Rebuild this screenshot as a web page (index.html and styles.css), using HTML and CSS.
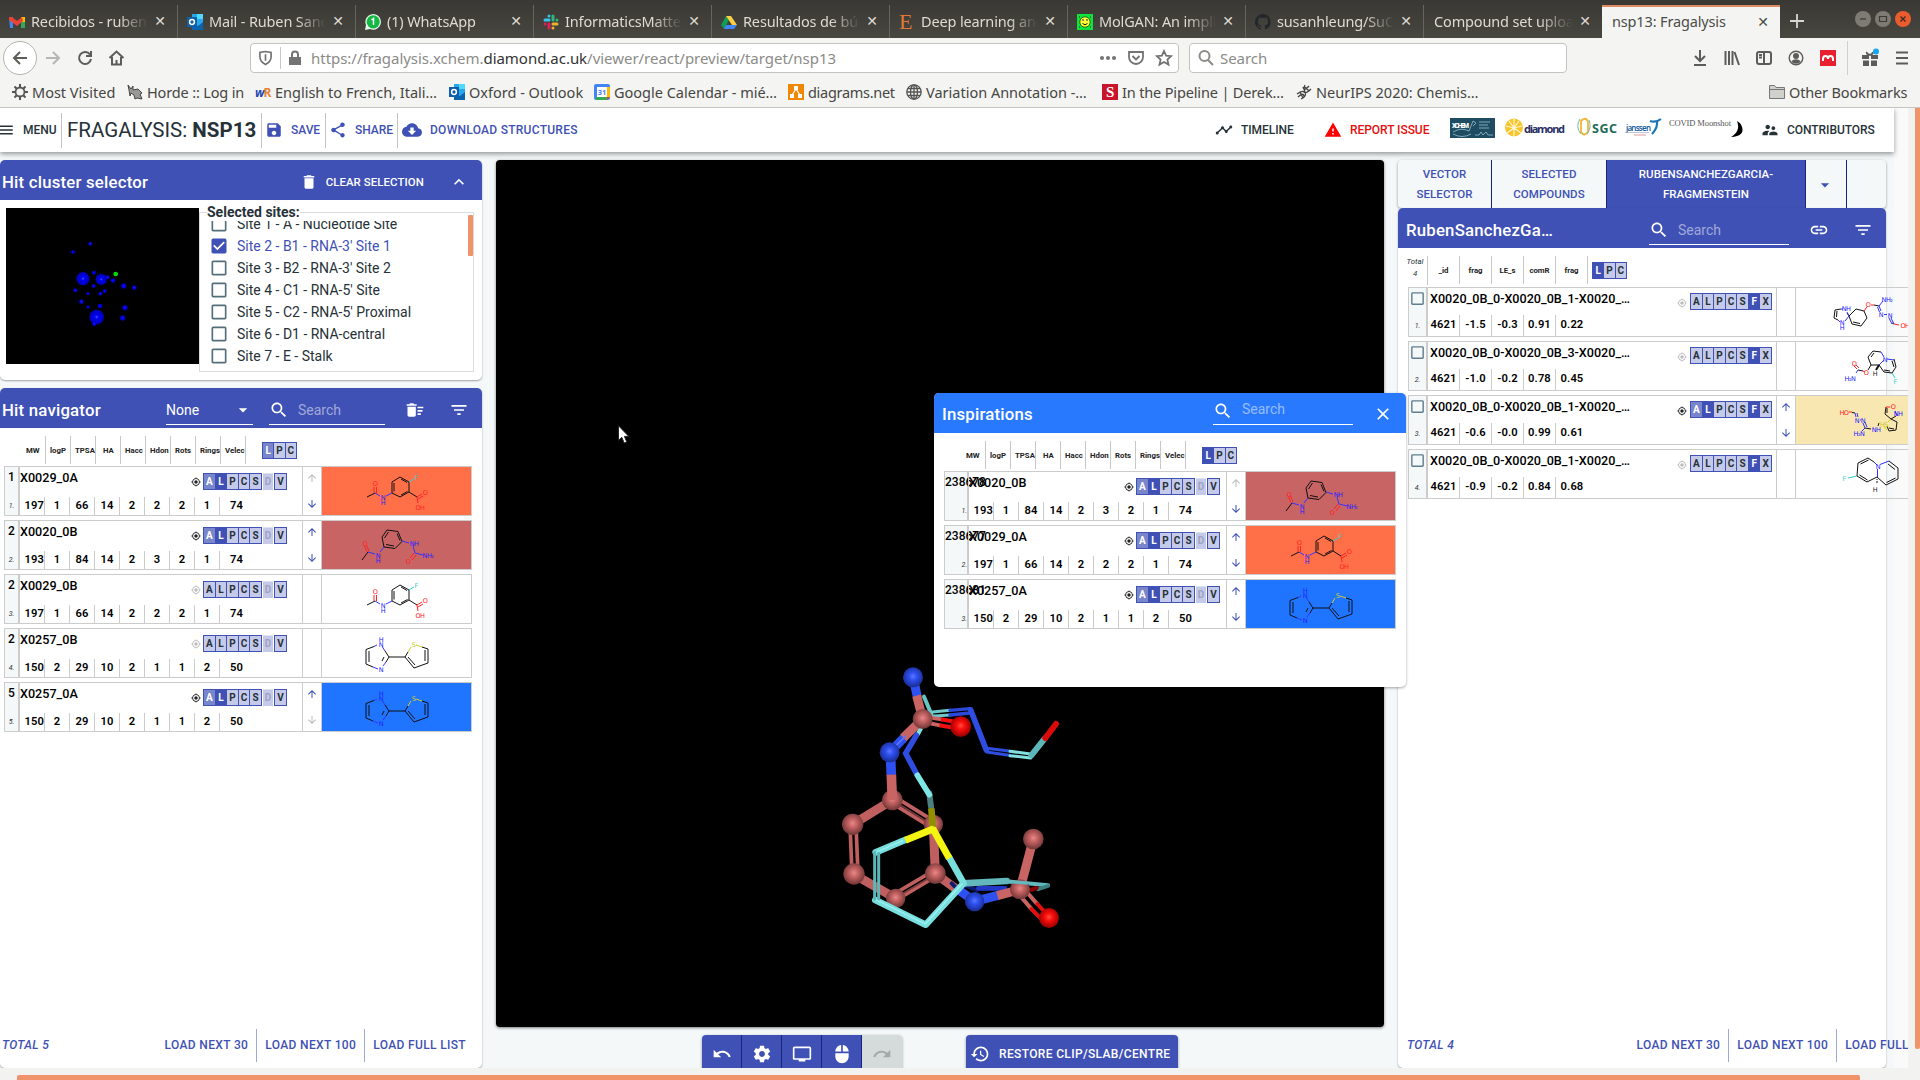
FILE: index.html
```html
<!DOCTYPE html>
<html lang="en">
<head>
<meta charset="utf-8">
<title>nsp13: Fragalysis</title>
<link rel="stylesheet" href="styles.css">
</head>
<body>
<svg class="defs" aria-hidden="true">
<defs>
<radialGradient id="gp" cx=".5" cy=".45" r=".55"><stop offset="0" stop-color="#e58a8a"/><stop offset=".35" stop-color="#c86464"/><stop offset="1" stop-color="#6e3535"/></radialGradient>
<radialGradient id="gb" cx=".5" cy=".45" r=".55"><stop offset="0" stop-color="#5a78ff"/><stop offset=".35" stop-color="#2f50f0"/><stop offset="1" stop-color="#172c90"/></radialGradient>
<radialGradient id="gr" cx=".5" cy=".45" r=".55"><stop offset="0" stop-color="#ff5040"/><stop offset=".35" stop-color="#ff0d0d"/><stop offset="1" stop-color="#900000"/></radialGradient>
<radialGradient id="gc"><stop offset="0" stop-color="#5050ff"/><stop offset=".25" stop-color="#0000f5"/><stop offset="1" stop-color="#0000b0"/></radialGradient>
</defs>
<symbol id="menu" viewBox="0 0 24 24"><path d="M3 18h18v-2H3v2zm0-5h18v-2H3v2zm0-7v2h18V6H3z"/></symbol>
<symbol id="save" viewBox="0 0 24 24"><path d="M17 3H5c-1.11 0-2 .9-2 2v14c0 1.1.89 2 2 2h14c1.1 0 2-.9 2-2V7l-4-4zm-5 16c-1.66 0-3-1.34-3-3s1.34-3 3-3 3 1.34 3 3-1.34 3-3 3zm3-10H5V5h10v4z"/></symbol>
<symbol id="share" viewBox="0 0 24 24"><path d="M18 16.08c-.76 0-1.44.3-1.96.77L8.91 12.7c.05-.23.09-.46.09-.7s-.04-.47-.09-.7l7.05-4.11c.54.5 1.25.81 2.04.81 1.66 0 3-1.34 3-3s-1.34-3-3-3-3 1.34-3 3c0 .24.04.47.09.7L8.04 9.81C7.5 9.31 6.79 9 6 9c-1.66 0-3 1.34-3 3s1.34 3 3 3c.79 0 1.5-.31 2.04-.81l7.12 4.16c-.05.21-.08.43-.08.65 0 1.61 1.31 2.92 2.92 2.92s2.92-1.31 2.92-2.92-1.31-2.92-2.92-2.92z"/></symbol>
<symbol id="cloud" viewBox="0 0 24 24"><path d="M19.35 10.04C18.67 6.59 15.64 4 12 4 9.11 4 6.6 5.64 5.35 8.04 2.34 8.36 0 10.91 0 14c0 3.31 2.69 6 6 6h13c2.76 0 5-2.24 5-5 0-2.64-2.05-4.78-4.65-4.96zM17 13l-5 5-5-5h3V9h4v4h3z"/></symbol>
<symbol id="timeline" viewBox="0 0 24 24"><path d="M23 8c0 1.1-.9 2-2 2-.18 0-.35-.02-.51-.07l-3.56 3.55c.05.16.07.34.07.52 0 1.1-.9 2-2 2s-2-.9-2-2c0-.18.02-.36.07-.52l-2.55-2.55c-.16.05-.34.07-.52.07s-.36-.02-.52-.07l-4.55 4.56c.05.16.07.33.07.51 0 1.1-.9 2-2 2s-2-.9-2-2 .9-2 2-2c.18 0 .35.02.51.07l4.56-4.55C8.02 9.36 8 9.18 8 9c0-1.1.9-2 2-2s2 .9 2 2c0 .18-.02.36-.07.52l2.55 2.55c.16-.05.34-.07.52-.07s.36.02.52.07l3.55-3.56C19.02 8.35 19 8.18 19 8c0-1.1.9-2 2-2s2 .9 2 2z"/></symbol>
<symbol id="warning" viewBox="0 0 24 24"><path d="M1 21h22L12 2 1 21zm12-3h-2v-2h2v2zm0-4h-2v-4h2v4z"/></symbol>
<symbol id="people" viewBox="0 0 24 24"><path d="M16.5 12c1.38 0 2.49-1.12 2.49-2.5S17.88 7 16.5 7C15.12 7 14 8.12 14 9.5s1.12 2.5 2.5 2.5zM9 11c1.66 0 2.99-1.34 2.99-3S10.66 5 9 5C7.34 5 6 6.34 6 8s1.34 3 3 3zm7.5 3c-1.83 0-5.5.92-5.5 2.75V19h11v-2.25c0-1.83-3.67-2.75-5.5-2.75zM9 13c-2.33 0-7 1.17-7 3.5V19h7v-2.25c0-.85.33-2.34 2.37-3.47C10.5 13.1 9.66 13 9 13z"/></symbol>
<symbol id="delete" viewBox="0 0 24 24"><path d="M6 19c0 1.1.9 2 2 2h8c1.1 0 2-.9 2-2V7H6v12zM19 4h-3.5l-1-1h-5l-1 1H5v2h14V4z"/></symbol>
<symbol id="less" viewBox="0 0 24 24"><path d="M12 8l-6 6 1.41 1.41L12 10.83l4.59 4.58L18 14z"/></symbol>
<symbol id="drop" viewBox="0 0 24 24"><path d="M7 10l5 5 5-5z"/></symbol>
<symbol id="search" viewBox="0 0 24 24"><path d="M15.5 14h-.79l-.28-.27C15.41 12.59 16 11.11 16 9.5 16 5.91 13.09 3 9.5 3S3 5.91 3 9.5 5.91 16 9.5 16c1.61 0 3.09-.59 4.23-1.57l.27.28v.79l5 4.99L20.49 19l-4.99-5zm-6 0C7.01 14 5 11.99 5 9.5S7.01 5 9.5 5 14 7.01 14 9.5 11.99 14 9.5 14z"/></symbol>
<symbol id="sweep" viewBox="0 0 24 24"><path d="M15 16h4v2h-4zm0-8h7v2h-7zm0 4h6v2h-6zM3 18c0 1.1.9 2 2 2h6c1.1 0 2-.9 2-2V8H3v10zM14 5h-3l-1-1H6L5 5H2v2h12z"/></symbol>
<symbol id="filter" viewBox="0 0 24 24"><path d="M10 18h4v-2h-4v2zM3 6v2h18V6H3zm3 7h12v-2H6v2z"/></symbol>
<symbol id="close" viewBox="0 0 24 24"><path d="M19 6.41L17.59 5 12 10.59 6.41 5 5 6.41 10.59 12 5 17.59 6.41 19 12 13.41 17.59 19 19 17.59 13.41 12z"/></symbol>
<symbol id="target" viewBox="0 0 24 24"><path d="M12 8c-2.21 0-4 1.79-4 4s1.79 4 4 4 4-1.79 4-4-1.79-4-4-4zm8.94 3c-.46-4.17-3.77-7.48-7.94-7.94V1h-2v2.06C6.83 3.52 3.52 6.83 3.06 11H1v2h2.06c.46 4.17 3.77 7.48 7.94 7.94V23h2v-2.06c4.17-.46 7.48-3.77 7.94-7.94H23v-2h-2.06zM12 19c-3.87 0-7-3.13-7-7s3.13-7 7-7 7 3.13 7 7-3.13 7-7 7z"/></symbol>
<symbol id="up" viewBox="0 0 24 24"><path d="M4 12l1.41 1.41L11 7.83V20h2V7.83l5.58 5.59L20 12l-8-8-8 8z"/></symbol>
<symbol id="down" viewBox="0 0 24 24"><path d="M20 12l-1.41-1.41L13 16.17V4h-2v12.17l-5.58-5.59L4 12l8 8 8-8z"/></symbol>
<symbol id="link" viewBox="0 0 24 24"><path d="M3.9 12c0-1.71 1.39-3.1 3.1-3.1h4V7H7c-2.76 0-5 2.24-5 5s2.24 5 5 5h4v-1.9H7c-1.71 0-3.1-1.39-3.1-3.1zM8 13h8v-2H8v2zm9-6h-4v1.9h4c1.71 0 3.1 1.39 3.1 3.1s-1.39 3.1-3.1 3.1h-4V17h4c2.76 0 5-2.24 5-5s-2.24-5-5-5z"/></symbol>
<symbol id="undo" viewBox="0 0 24 24"><path d="M12.5 8c-2.65 0-5.05.99-6.9 2.6L2 7v9h9l-3.62-3.62c1.39-1.16 3.16-1.88 5.12-1.88 3.54 0 6.55 2.31 7.6 5.5l2.37-.78C21.08 11.03 17.15 8 12.5 8z"/></symbol>
<symbol id="gear" viewBox="0 0 24 24"><path d="M19.43 12.98c.04-.32.07-.64.07-.98s-.03-.66-.07-.98l2.11-1.65c.19-.15.24-.42.12-.64l-2-3.46c-.12-.22-.39-.3-.61-.22l-2.49 1c-.52-.4-1.08-.73-1.69-.98l-.38-2.65C14.46 2.18 14.25 2 14 2h-4c-.25 0-.46.18-.49.42l-.38 2.65c-.61.25-1.17.59-1.69.98l-2.49-1c-.23-.09-.49 0-.61.22l-2 3.46c-.13.22-.07.49.12.64l2.11 1.65c-.04.32-.07.65-.07.98s.03.66.07.98l-2.11 1.65c-.19.15-.24.42-.12.64l2 3.46c.12.22.39.3.61.22l2.49-1c.52.4 1.08.73 1.69.98l.38 2.65c.03.24.24.42.49.42h4c.25 0 .46-.18.49-.42l.38-2.65c.61-.25 1.17-.59 1.69-.98l2.49 1c.23.09.49 0 .61-.22l2-3.46c.12-.22.07-.49-.12-.64l-2.11-1.65zM12 15.5c-1.93 0-3.5-1.57-3.5-3.5s1.57-3.5 3.5-3.5 3.5 1.57 3.5 3.5-1.57 3.5-3.5 3.5z"/></symbol>
<symbol id="tv" viewBox="0 0 24 24"><path d="M21 3H3c-1.1 0-2 .9-2 2v12c0 1.1.9 2 2 2h5v2h8v-2h5c1.1 0 1.99-.9 1.99-2L23 5c0-1.1-.9-2-2-2zm0 14H3V5h18v12z"/></symbol>
<symbol id="mouse" viewBox="0 0 24 24"><path d="M13 1.07V9h7c0-4.08-3.05-7.44-7-7.93zM4 15c0 4.42 3.58 8 8 8s8-3.58 8-8v-4H4v4zm7-13.93C7.05 1.56 4 4.92 4 9h7V1.07z"/></symbol>
<symbol id="history" viewBox="0 0 24 24"><path d="M13 3c-4.97 0-9 4.03-9 9H1l3.89 3.89.07.14L9 12H6c0-3.87 3.13-7 7-7s7 3.13 7 7-3.13 7-7 7c-1.93 0-3.68-.79-4.94-2.06l-1.42 1.42C8.27 19.99 10.51 21 13 21c4.97 0 9-4.03 9-9s-4.03-9-9-9zm-1 5v5l4.28 2.54.72-1.21-3.5-2.08V8H12z"/></symbol>
<symbol id="checked" viewBox="0 0 24 24"><path d="M19 3H5c-1.11 0-2 .9-2 2v14c0 1.1.89 2 2 2h14c1.11 0 2-.9 2-2V5c0-1.1-.89-2-2-2zm-9 14l-5-5 1.41-1.41L10 14.17l7.59-7.59L19 8l-9 9z"/></symbol>
<symbol id="unchecked" viewBox="0 0 24 24"><path d="M19 5v14H5V5h14m0-2H5c-1.1 0-2 .9-2 2v14c0 1.1.9 2 2 2h14c1.1 0 2-.9 2-2V5c0-1.1-.9-2-2-2z"/></symbol>
<symbol id="outlook" viewBox="0 0 16 16"><path fill="#28a8ea" d="M5 0h11v15H5z"/><path fill="#50d9ff" d="M10 0h6v5h-6z"/><path fill="#0a64ad" d="M5 9l6 3 5-4v8H5z"/><path fill="#0f5fa8" d="M0 3h10v10H0z"/><circle cx="5" cy="8" r="2.4" fill="none" stroke="#fff" stroke-width="1.5"/></symbol>

<symbol id="mol-a" viewBox="0 0 149 48">
<path class="bk" d="M45 30l8-4M70 26V15l8-5 9 5v10l-9 5zM72 24.500V16M79 12l6 3.500M85.500 24.500L79 28M87 25l8 5"/>
<path class="or" d="M52 26v-6M54.500 26v-6M95 30l5-3M96 32l5-3M95 30l1 6"/><path class="nb" d="M53 26l5 3M64 29l6-3"/><path class="fc" d="M87 15l5-3"/>
<text class="or" x="53" y="18.500">O</text><text class="or" x="103" y="27.500">O</text><text class="or" x="98" y="42.500">OH</text><text class="nb" x="61" y="32.500">N</text><text class="nb" x="61" y="37.500">H</text><text class="fc" x="94" y="12.500">F</text></symbol>
<symbol id="mol-b" viewBox="0 0 149 48">
<path class="bk" d="M40 39l6-8M60 16l5-7 11 1.500 4 10-7 7-11-1.500zM62.500 17l4-6M75 12.500l3 7M72 25l-8-1.500"/>
<path class="or" d="M45 31l-2.500-6M47 30l-2.500-6M92 32l-4 5M94 34l-4 5"/><path class="nb" d="M46 31l7 2M58 31l4-5M80 20l7 2M91 25l2 7M93 32l8 2"/>
<text class="or" x="43" y="24.500">O</text><text class="or" x="86" y="42.500">O</text><text class="nb" x="56" y="36.500">N</text><text class="nb" x="56" y="41.500">H</text><text class="nb" x="92" y="24.500">NH</text><text class="nb" x="106" y="37">NH₂</text></symbol>
<symbol id="mol-c" viewBox="0 0 149 48">
<path class="bk" d="M52 17.500l-8 3v14.500l7 3M47 22v11M63 22l4 6-3 5M62 28l-2 4M67 28h16l9 11 14-5V20l-6-2M86 28l7 8M103 21v11M83 28l3-5"/>
<path class="nb" d="M55 16l-3 1.500M60.500 18l2.500 4M51 38l5 2M64 33l-3 4"/><path class="sy" d="M86 23l3-5M94 16l6 2"/>
<text class="nb" x="59" y="17.500">N</text><text class="nb" x="59" y="12.500">H</text><text class="nb" x="59" y="42.500">N</text><text class="sy" x="91.500" y="17.500">S</text></symbol>
<symbol id="mol-d" viewBox="0 0 149 48">
<path class="bk" d="M39 22l-1 8 4 2M41 23l-.5 6M39 22l6-1M53 28l7-7 8 2 3 7-6 8-9-2zM57 34l7 1.500M53 28l-2-3M78 17l5 1M96 35l2 1"/>
<path class="nb" d="M45 21h2M51 24l2 4M42 32l2 2M49 33l4-5M83 18l2 5M81.500 19l2 5M83 18l4-5M88 26.500h3M95 30l3 6M93 30l3 6"/><path class="or" d="M68 23l3-4M75 17h3M98 36l5 1"/>
<text class="nb" x="50" y="23">NH</text><text class="nb" x="46" y="37">N</text><text class="nb" x="46" y="42">H</text><text class="or" x="72" y="18.500">O</text><text class="nb" x="91" y="13.500">NH₂</text><text class="nb" x="85" y="28.500">N</text><text class="nb" x="94" y="29.500">N</text><text class="or" x="109" y="40">OH</text></symbol>
<symbol id="mol-e" viewBox="0 0 149 48">
<path class="bk" d="M72 15l5-6 8 1M75 15l3-4M72 15l3 8h8M98 17l2 8-4 6-8-1-5-7M96 19l2 6M94 29l-6-1M75 23l-3 5M62 28l5 1"/><path class="thick" d="M83 23l-3 5"/>
<path class="nb" d="M85 10l3 5M83 23l5-5M91 17l7 1M60 31l2-3"/><path class="or" d="M67 29l2 1M61 27l-3-3M63 26l-3-3"/><path class="fc" d="M96 31l3 5"/>
<text class="nb" x="89" y="19.500">N</text><text class="bkt" x="79" y="33.500">H</text><text class="fc" x="99" y="42">F</text><text class="or" x="70" y="32.500">O</text><text class="or" x="58" y="24">O</text><text class="nb" x="54" y="38.500">H₂N</text></symbol>
<symbol id="mol-f" viewBox="0 0 149 48">
<path class="bk" d="M59 17l-3-.5M95 23l6 3-1 8-7 1-2-5M98 33l-5-1M95 23l-6-5 1-7M91 17v-5M69 32l6 1M83 27l-1 3M95 23l5-3"/>
<path class="nb" d="M59 17l1 4M61 17l1 4M64 24h1M67 27l2 5M69 26l2 5M69 32l-3 3M101 20l-2-5"/><path class="or" d="M53 16h3M90 11h4"/><path class="sy" d="M83 27h1M92 26l3-3M88 30l3 4"/>
<text class="or" x="48" y="18.500">HO</text><text class="nb" x="61" y="27">N</text><text class="nb" x="67" y="27">N</text><text class="nb" x="63" y="40">H₂N</text><text class="nb" x="80" y="35.500">NH</text><text class="sy" x="88" y="30.500">HS</text><text class="or" x="97" y="13">O</text><text class="nb" x="102" y="19.500">NH</text></symbol>
<symbol id="mol-g" viewBox="0 0 149 48">
<path class="bk" d="M81 27l-10 5-10-6 1-13 10-5 6 4M64.500 14l8-4M63.500 25l8 5M93 11l9 7v11l-12 6-9-8M92 14l7 5.500M99.500 28l-9 4.500M81 29v1M80 32h2"/>
<path class="nb" d="M78 12l3 3M81.500 19v8M84 14.500l9-3.500"/><path class="fc" d="M61 26l-9 2"/>
<text class="nb" x="82" y="18.500">N</text><text class="fc" x="48" y="30.500">F</text><text class="bkt" x="79" y="41.500">H</text></symbol>
</svg>

<header class="browser">
<div class="tabs">
 <div class="tab"><svg class="fav" viewBox="0 0 16 16"><path fill="#4285f4" d="M0 3h4v11H1z"/><path fill="#34a853" d="M12 6h4v8h-4z"/><path fill="#fbbc04" d="M12 3h4v5h-4z"/><path fill="#ea4335" d="M0 3h3l5 4 5-4 1 4-6 5-8-6z"/></svg><span>Recibidos - rubens</span><i>✕</i></div>
 <div class="tab"><svg class="fav"><use href="#outlook"/></svg><span>Mail - Ruben Sanchez</span><i>✕</i></div>
 <div class="tab"><svg class="fav" viewBox="0 0 16 16"><path fill="#e8f5e9" d="M0 16l1-5a7.800 7.800 0 1 1 4 4z"/><circle cx="8.200" cy="7.800" r="6.600" fill="#12b842"/><path fill="none" stroke="#fff" stroke-width="1.500" d="M6.500 6L8.500 4.500V11"/></svg><span>(1) WhatsApp</span><i>✕</i></div>
 <div class="tab"><svg class="fav line" viewBox="0 0 16 16" stroke-width="3" stroke-linecap="round"><path stroke="#36c5f0" d="M2 6h4M6 2v.1"/><path stroke="#2eb67d" d="M10 2v4M14 6h-.1"/><path stroke="#ecb22e" d="M14 10h-4M10 14v-.1"/><path stroke="#e01e5a" d="M6 14v-4M2 10h.1"/></svg><span>InformaticsMatters</span><i>✕</i></div>
 <div class="tab"><svg class="fav" viewBox="0 0 16 16"><path fill="#0f9d58" d="M5 2L0 11l3 4 5-9z"/><path fill="#ffcd40" d="M5 2h5l6 9h-5z"/><path fill="#4285f4" d="M5 11h11l-3 4H3z"/></svg><span>Resultados de búsq</span><i>✕</i></div>
 <div class="tab"><b class="fav ltr-e">E</b><span>Deep learning and</span><i>✕</i></div>
 <div class="tab"><svg class="fav" viewBox="0 0 16 16"><path fill="#0fe43c" d="M0 0h16v16H0z"/><circle cx="8" cy="8" r="5.200" fill="#ff3" stroke="#262"/><path fill="none" stroke="#222" d="M6 5v2M10 5v2M5.500 9.500q2.500 2.500 5 0M2 3h1M13 13h1M13 3h1M2 13h1"/></svg><span>MolGAN: An implicit</span><i>✕</i></div>
 <div class="tab"><svg class="fav" viewBox="0 0 16 16"><path fill="#22272b" d="M8 0a8 8 0 0 0-2.500 15.600c.4 0 .5-.2.500-.400v-1.500c-2.200.5-2.700-1-2.700-1-.4-.9-.9-1.200-.9-1.200-.7-.5.1-.5.100-.5.8 0 1.200.8 1.200.8.7 1.200 1.900.9 2.300.7 0-.5.300-.9.500-1.100-1.800-.2-3.600-.9-3.600-4 0-.9.300-1.600.8-2.100 0-.2-.3-1 .1-2.100 0 0 .7-.2 2.200.8a7.500 7.500 0 0 1 4 0c1.500-1 2.200-.8 2.200-.8.4 1.100.1 1.900.1 2.100.5.6.8 1.300.8 2.100 0 3.100-1.900 3.700-3.700 3.900.3.300.6.800.6 1.500v2.200c0 .2.100.5.500.4A8 8 0 0 0 8 0z"/></svg><span>susanhleung/SuCOS</span><i>✕</i></div>
 <div class="tab noicon last"><span>Compound set upload</span><i>✕</i></div>
 <div class="tab noicon active"><span>nsp13: Fragalysis</span><i>✕</i></div>
 <svg class="plus" viewBox="0 0 14 14"><path d="M7 0v14M0 7h14" stroke="#d8d7d0" stroke-width="1.800"/></svg>
 <div class="wins"><svg viewBox="0 0 16 16"><circle cx="8" cy="8" r="8" fill="#7d7b73"/><path stroke="#3c3b37" stroke-width="1.300" d="M5 8h6"/></svg><svg viewBox="0 0 16 16"><circle cx="8" cy="8" r="8" fill="#7d7b73"/><path fill="none" stroke="#3c3b37" stroke-width="1.200" d="M4.500 5.500h7v5h-7z"/></svg><svg viewBox="0 0 16 16"><circle cx="8" cy="8" r="8" fill="#ea5c2e"/><path stroke="#3c2b27" stroke-width="1.300" d="M5.500 5.500l5 5m0-5l-5 5"/></svg></div>
</div>
<div class="nav">
 <span class="back"><svg viewBox="0 0 16 16"><path d="M15 8H2M8 2L2 8l6 6"/></svg></span>
 <svg class="fwd" viewBox="0 0 16 16"><path d="M1 8h13M8 2l6 6-6 6"/></svg>
 <svg class="reload" viewBox="0 0 16 16"><path d="M13 4.500A6 6 0 1 0 14 9M14 1v5H9"/></svg>
 <svg class="home" viewBox="0 0 16 16"><path d="M1 8l7-6.500L15 8M3.500 7v7.500h9V7M8 14v-4"/></svg>
 <div class="url">
  <svg class="shield" viewBox="0 0 14 16"><path d="M1 2l6-1 6 1v5c0 4-3 6.500-6 8-3-1.500-6-4-6-8z"/><path d="M7 4v7"/></svg><i></i>
  <svg class="lock" viewBox="0 0 12 16"><path d="M0 7h12v8H0z"/><path fill="none" stroke="#737373" stroke-width="2" d="M3 8V4.500a3 3 0 0 1 6 0V8"/></svg>
  <span class="addr">https://fragalysis.xchem.<b>diamond.ac.uk</b>/viewer/react/preview/target/nsp13</span>
  <svg class="dots" viewBox="0 0 16 16"><circle cx="2" cy="8" r="2"/><circle cx="8" cy="8" r="2"/><circle cx="14" cy="8" r="2"/></svg>
  <svg viewBox="0 0 16 16"><path d="M1 2h14v5a7 7 0 0 1-14 0zM4.500 6L8 9.500 11.500 6"/></svg>
  <svg viewBox="0 0 16 16"><path d="M8 1l2.100 4.700 5 .5-3.700 3.400 1.100 5L8 12l-4.500 2.600 1.100-5L.9 6.200l5-.5z"/></svg>
 </div>
 <div class="find"><svg viewBox="0 0 16 16"><circle cx="6.500" cy="6" r="5"/><path d="M10 10l5 5"/></svg><span>Search</span></div>
 <div class="tools">
  <svg viewBox="0 0 16 16"><path d="M8 0v11M3 6l5 5 5-5M2 15h12"/></svg>
  <svg viewBox="0 0 16 16"><path d="M1.500 1v14M5 1v14M8.500 1v14M10.500 2l4.500 13"/></svg>
  <svg viewBox="0 0 16 16"><rect x="1" y="2" width="14" height="12" rx="2"/><path d="M8 2v12M3 5h3M3 7.500h3"/></svg>
  <svg viewBox="0 0 16 16"><circle cx="8" cy="8" r="6.800" stroke-width="1.400"/><circle cx="8" cy="6" r="3" fill="#5c5c58" stroke="none"/><path fill="#5c5c58" stroke="none" d="M3.500 11.500c2-3 7-3 9 0-2 3-7 3-9 0z"/></svg>
  <svg viewBox="0 0 16 16"><path fill="#e9202f" stroke="none" d="M0 0h16v16H0z"/><path stroke="#fff" d="M3 11V9q0-3 2.500-3T8 9q0-3 2.500-3T13 9v2"/></svg>
  <i></i>
  <svg viewBox="0 0 16 16"><path fill="#5c5c58" stroke="none" d="M0 5h7v4H0zM9 5h7v4H9zM1 10.500h6V16H1zM9 10.500h6V16H9z"/><path d="M8 5Q4 4 5 2M8 5q3-1 3-3"/><circle cx="14" cy="1.500" r="3" fill="#12a8f5" stroke="none"/></svg>
  <svg viewBox="0 0 16 16"><path d="M2 2.500h12M2 8h12M2 13.500h12"/></svg>
 </div>
</div>
<div class="marks">
 <span class="m1"><svg viewBox="0 0 16 16"><circle cx="8" cy="8" r="4.500" fill="none" stroke="#555" stroke-width="1.800"/><path stroke="#555" stroke-width="2" d="M8 0v3M8 13v3M0 8h3M13 8h3M2.500 2.500l2 2M11.500 11.500l2 2M2.500 13.500l2-2M11.500 4.500l2-2"/></svg>Most Visited</span>
 <span class="m2"><svg viewBox="0 0 16 16"><path fill="#999" stroke="#444" d="M1 1l3 4 2-3v4l5-1 4 4-2 1 2 5-5-1-2 1-1-4-3-2-1 3-1-6z"/></svg>Horde :: Log in</span>
 <span class="m3"><b class="wr"><em>w</em>R</b>English to French, Itali…</span>
 <span class="m4"><svg><use href="#outlook"/></svg>Oxford - Outlook</span>
 <span class="m5"><svg viewBox="0 0 16 16"><rect width="16" height="16" rx="2" fill="#4285f4"/><path fill="#34a853" d="M2 13h11v3H2z"/><path fill="#fbbc04" d="M13 3h3v10h-3z"/><path fill="#ea4335" d="M13 13h3l-3 3z"/><path fill="#fff" d="M3 3h10v10H3z"/><text x="8" y="10.800" font-size="7.500" font-weight="700" text-anchor="middle" fill="#4285f4">31</text></svg>Google Calendar - mié…</span>
 <span class="m6"><svg viewBox="0 0 16 16"><path fill="#f08705" d="M0 0h16v16H0z"/><path fill="#fff" d="M6 2h4v4H6zM2 10h4v4H2zM10 10h4v4h-4z"/><path stroke="#fff" stroke-width="1.200" d="M8 5l-4 6M8 5l4 6"/></svg>diagrams.net</span>
 <span class="m7"><svg class="line" viewBox="0 0 16 16" stroke="#555" stroke-width="1.300"><circle cx="8" cy="8" r="7.200"/><ellipse cx="8" cy="8" rx="3.500" ry="7.200"/><path d="M1 8h14M8 1v14M2 4.500h12M2 11.500h12"/></svg>Variation Annotation -…</span>
 <span class="m8"><b class="ltr-s">S</b>In the Pipeline | Derek…</span>
 <span class="m9"><svg class="line" viewBox="0 0 16 16" stroke="#444" stroke-width="1.300"><path d="M1 10q5-4 7-2t7-3M2 13q5-5 6-1M7 3q1 5 6-1M9 1q-2 3 0 7t-4 7M4 8l3 6M9 3l4 4"/></svg>NeurIPS 2020: Chemis…</span>
 <span class="m10"><svg viewBox="0 0 16 16"><path fill="#d0d0cc" stroke="#777" d="M.5 14.500v-13h5l1.500 2h8.500v11zM.5 5.500h15"/></svg>Other Bookmarks</span>
</div>
</header>

<div class="page">
<div class="app">
<div class="appbar">
 <span class="btn b-menu"><svg><use href="#menu"/></svg>MENU</span>
 <h1>FRAGALYSIS: <b>NSP13</b></h1>
 <span class="btn b-save blue"><svg><use href="#save"/></svg>SAVE</span>
 <span class="btn b-share blue"><svg><use href="#share"/></svg>SHARE</span>
 <span class="btn b-down blue"><svg><use href="#cloud"/></svg>DOWNLOAD STRUCTURES</span>
 <span class="btn b-time"><svg><use href="#timeline"/></svg>TIMELINE</span>
 <span class="btn b-report"><svg><use href="#warning"/></svg>REPORT ISSUE</span>
 <svg class="logos" viewBox="0 0 300 24">
  <path fill="#1d4c63" d="M0 2h45v20H0z"/><text x="2" y="12" font-size="6.500" font-weight="900" fill="#fff" textLength="17">XCHEM</text><path fill="none" stroke="#9cc0cc" stroke-width=".8" d="M3 16q8-5 16-1l2-5 2-5 3 2-3 3M3 18q9 5 18 0M25 19h4l2-3 2 3 3-3 2 3h5M29 6h11M29 9h9M29 12h10"/>
  <circle cx="64" cy="11.500" r="9" fill="#f8c52c"/><path stroke="#fff6d0" stroke-width="1.200" d="M64 12V3M64 12l-5-7M64 12l5-7M64 12l-8-2M64 12l8-2M64 12l-7 5M64 12l7 5M64 12v9"/><text class="dl" x="74" y="17" textLength="41">diamond</text>
  <path fill="none" stroke="#f2b632" stroke-width="1.800" d="M131 5q5-5 7 1v10q-4 5-7 0z"/><path fill="none" stroke="#7ab3a8" d="M130 3q-5 8 1 15M139 4q3 7-2 14"/><text class="sgc" x="142" y="17" textLength="25">SGC</text>
  <text class="jan" x="176" y="14.500" textLength="25">janssen</text><path fill="none" stroke="#1b75b5" stroke-width="2.200" d="M200 5q6 2 11-2M207 5q1 7-5 13"/><path stroke="#d99" d="M184 19h12"/><path stroke="#aac" stroke-width=".7" d="M176 16.500h23"/>
  <text class="cov" x="219" y="10" textLength="62">COVID Moonshot</text><path fill="#000" d="M287 5q4 10-6 16 14-1 11-10-1-4-5-6z"/>
 </svg>
 <span class="btn b-contrib"><svg><use href="#people"/></svg>CONTRIBUTORS</span>
</div>

<main>
<section class="left">
 <div class="card cluster">
  <div class="head"><h2>Hit cluster selector</h2><span class="clear"><svg><use href="#delete"/></svg>CLEAR SELECTION</span><svg class="ic20"><use href="#less"/></svg></div>
  <div class="cbody">
   <svg class="map" viewBox="0 0 193 156"><g transform="translate(-6 -53) scale(.33333)" fill="url(#gc)"><circle cx="249" cy="371" r="20"/><circle cx="304" cy="373" r="17"/><circle cx="290" cy="486" r="22"/><circle cx="271" cy="266" r="6"/><circle cx="219" cy="291" r="6"/><circle cx="282" cy="353" r="6"/><circle cx="323" cy="367" r="6"/><circle cx="339" cy="377" r="7"/><circle cx="371" cy="393" r="8"/><circle cx="403" cy="398" r="7"/><circle cx="281" cy="393" r="6"/><circle cx="226" cy="406" r="6"/><circle cx="264" cy="416" r="5"/><circle cx="301" cy="416" r="6"/><circle cx="314" cy="408" r="6"/><circle cx="244" cy="440" r="7"/><circle cx="264" cy="456" r="5"/><circle cx="300" cy="453" r="7"/><circle cx="375" cy="458" r="8"/><circle cx="368" cy="489" r="8"/><circle cx="283" cy="506" r="7"/><circle cx="347" cy="357" r="7" fill="#0d0"/></g></svg>
   <fieldset><legend>Selected sites:</legend>
    <div class="sites">
     <label><svg><use href="#unchecked"/></svg>Site 1 - A - Nucleotide Site</label>
     <label class="on"><svg><use href="#checked"/></svg>Site 2 - B1 - RNA-3' Site 1</label>
     <label><svg><use href="#unchecked"/></svg>Site 3 - B2 - RNA-3' Site 2</label>
     <label><svg><use href="#unchecked"/></svg>Site 4 - C1 - RNA-5' Site</label>
     <label><svg><use href="#unchecked"/></svg>Site 5 - C2 - RNA-5' Proximal</label>
     <label><svg><use href="#unchecked"/></svg>Site 6 - D1 - RNA-central</label>
     <label><svg><use href="#unchecked"/></svg>Site 7 - E - Stalk</label>
     <label><svg><use href="#unchecked"/></svg></label>
    </div><i class="thumb"></i>
   </fieldset>
  </div>
 </div>
 <div class="card navi">
  <div class="head"><h2>Hit navigator</h2><span class="select">None<svg><use href="#drop"/></svg></span><span class="sfield"><svg><use href="#search"/></svg>Search</span><svg class="ic20 sw"><use href="#sweep"/></svg><svg class="ic20"><use href="#filter"/></svg></div>
  <div class="cols"><span>MW</span><span>logP</span><span>TPSA</span><span>HA</span><span>Hacc</span><span>Hdon</span><span>Rots</span><span>Rings</span><span>Velec</span><div class="lpc half"><b>L</b><b>P</b><b>C</b></div></div>
  <div class="row"><div class="num"><b>1</b><i>1.</i></div><div class="info"><div class="top"><span class="name">X0029_0A</span><svg class="tg"><use href="#target"/></svg><div class="tags on"><b>A</b><b>L</b><b>P</b><b>C</b><b>S</b></div><b class="d">D</b><b class="v">V</b></div><div class="vals"><span>197</span><span>1</span><span>66</span><span>14</span><span>2</span><span>2</span><span>2</span><span>1</span><span>74</span></div></div><div class="arr"><svg class="off"><use href="#up"/></svg><svg><use href="#down"/></svg></div><div class="pic orange"><svg><use href="#mol-a"/></svg></div></div>
  <div class="row"><div class="num"><b>2</b><i>2.</i></div><div class="info"><div class="top"><span class="name">X0020_0B</span><svg class="tg"><use href="#target"/></svg><div class="tags on"><b>A</b><b>L</b><b>P</b><b>C</b><b>S</b></div><b class="d">D</b><b class="v">V</b></div><div class="vals"><span>193</span><span>1</span><span>84</span><span>14</span><span>2</span><span>3</span><span>2</span><span>1</span><span>74</span></div></div><div class="arr"><svg><use href="#up"/></svg><svg><use href="#down"/></svg></div><div class="pic rose"><svg><use href="#mol-b"/></svg></div></div>
  <div class="row"><div class="num"><b>2</b><i>3.</i></div><div class="info"><div class="top"><span class="name">X0029_0B</span><svg class="tg off"><use href="#target"/></svg><div class="tags"><b>A</b><b>L</b><b>P</b><b>C</b><b>S</b></div><b class="d">D</b><b class="v">V</b></div><div class="vals"><span>197</span><span>1</span><span>66</span><span>14</span><span>2</span><span>2</span><span>2</span><span>1</span><span>74</span></div></div><div class="arr"></div><div class="pic"><svg><use href="#mol-a"/></svg></div></div>
  <div class="row"><div class="num"><b>2</b><i>4.</i></div><div class="info"><div class="top"><span class="name">X0257_0B</span><svg class="tg off"><use href="#target"/></svg><div class="tags"><b>A</b><b>L</b><b>P</b><b>C</b><b>S</b></div><b class="d">D</b><b class="v">V</b></div><div class="vals"><span>150</span><span>2</span><span>29</span><span>10</span><span>2</span><span>1</span><span>1</span><span>2</span><span>50</span></div></div><div class="arr"></div><div class="pic"><svg><use href="#mol-c"/></svg></div></div>
  <div class="row"><div class="num"><b>5</b><i>5.</i></div><div class="info"><div class="top"><span class="name">X0257_0A</span><svg class="tg"><use href="#target"/></svg><div class="tags on"><b>A</b><b>L</b><b>P</b><b>C</b><b>S</b></div><b class="d">D</b><b class="v">V</b></div><div class="vals"><span>150</span><span>2</span><span>29</span><span>10</span><span>2</span><span>1</span><span>1</span><span>2</span><span>50</span></div></div><div class="arr"><svg><use href="#up"/></svg><svg class="off"><use href="#down"/></svg></div><div class="pic azure"><svg><use href="#mol-c"/></svg></div></div>
  <div class="foot"><i>TOTAL 5</i><span>LOAD NEXT 30</span><span>LOAD NEXT 100</span><span>LOAD FULL LIST</span></div>
 </div>
</section>

<section class="mid">
 <div class="viewer">
  <svg viewBox="0 0 888 867"><g transform="translate(324 490) scale(.33333)" fill="none" stroke-linecap="round">
   <g stroke="#c05f5f" stroke-width="27"><path d="M217 450L98 523M102 673L227 745M340 523l6 148M346 671l60 44"/></g>
   <g stroke="#c05f5f" stroke-width="11"><path d="M90 523l6 150M108 523l6 150M222 439l118 73M212 457l118 73M341 662L222 732M350 678L232 748"/></g>
   <path stroke="#7c3c3c" stroke-width="5" d="M225 455l105 66M232 740l105-62"/>
   <circle cx="340" cy="523" r="29" fill="url(#gp)"/><circle cx="227" cy="745" r="29" fill="url(#gp)"/><circle cx="217" cy="450" r="31" fill="url(#gp)"/><circle cx="98" cy="523" r="32" fill="url(#gp)"/><circle cx="102" cy="672" r="32" fill="url(#gp)"/><circle cx="346" cy="671" r="31" fill="url(#gp)"/>
   <path stroke="#4c8080" stroke-width="18" d="M328 430l5 40"/><path stroke="#909000" stroke-width="20" stroke-linecap="butt" d="M334 475l5 62"/>
   <path stroke="#66c4c4" stroke-width="12" d="M312 140l22 52"/><g stroke="#6ec8c8" stroke-width="9"><path d="M330 187l60-6M332 199l58-4"/></g><g stroke="#2c48d8" stroke-width="10"><path d="M390 181l60-5M390 195l60-6"/></g>
   <path stroke="#2f4de0" stroke-width="17" d="M452 180l47 120"/><g stroke="#2f4de0" stroke-width="9"><path d="M500 295l67 8M500 306l67 10"/></g><g stroke="#7fe0e0" stroke-width="9"><path d="M570 304l62 8M570 317l62 7"/></g>
   <path stroke="#5cb8b8" stroke-width="18" d="M634 316l40-50"/><path stroke="#d80a0a" stroke-width="18" d="M676 264l32-42"/>
   <path stroke="#7fe0e0" stroke-width="13" d="M308 225l-14 26"/><path stroke="#2f4de0" stroke-width="17" d="M289 256l-32 54 33 62"/><path stroke="#7fe6e6" stroke-width="17" d="M292 376l36 58"/>
   <path stroke="#2f50f0" stroke-width="27" d="M279 82l12 54"/><path stroke="#c86464" stroke-width="27" stroke-linecap="butt" d="M290 137l18 70"/>
   <path stroke="#2f50f0" stroke-width="27" d="M210 307l42-44"/><path stroke="#c86464" stroke-width="27" stroke-linecap="butt" d="M250 263l58-56"/><path stroke="#5a78ff" stroke-width="5" d="M225 290l32-32"/>
   <path stroke="#2f50f0" stroke-width="29" stroke-linecap="butt" d="M211 307l3 68"/><path stroke="#c86464" stroke-width="29" stroke-linecap="butt" d="M214 374l3 76"/>
   <path stroke="#c86464" stroke-width="11" d="M325 202l40 6M320 218l40 8"/><path stroke="#f01010" stroke-width="12" stroke-linecap="butt" d="M362 208l60 10M358 226l60 10"/>
   <circle cx="279" cy="82" r="30" fill="url(#gb)"/><circle cx="308" cy="207" r="30" fill="url(#gp)"/><circle cx="422" cy="230" r="31" fill="url(#gr)"/><circle cx="209" cy="307" r="30" fill="url(#gb)"/>
   <path stroke="#101a70" stroke-width="12" d="M430 705l40 15"/><path stroke="#2438c8" stroke-width="14" d="M475 715l80 0"/><path stroke="#101a70" stroke-width="12" d="M395 700l40 40"/>
   <path stroke="#62b8bc" stroke-width="12" d="M560 694l124 12"/><path stroke="#3b8080" stroke-width="11" d="M684 708l-30 10"/><path stroke="#800" stroke-width="12" d="M632 720l18-6"/>
   <path stroke="#2f50f0" stroke-width="27" d="M464 754l70-18M464 754l-45-32"/><path stroke="#c86464" stroke-width="27" stroke-linecap="butt" d="M532 737l68-18"/><path stroke="#c86464" stroke-width="27" d="M600 718l40-151"/>
   <path stroke="#c86464" stroke-width="12" d="M615 720l35 40M598 735l35 40"/><path stroke="#e01010" stroke-width="12" d="M652 762l35 38M634 777l35 35"/>
   <circle cx="464" cy="755" r="29" fill="url(#gb)"/><circle cx="600" cy="718" r="30" fill="url(#gp)"/><circle cx="640" cy="567" r="31" fill="url(#gp)"/><circle cx="687" cy="804" r="30" fill="url(#gr)"/>
   <path stroke="#62b8bc" stroke-width="20" d="M430 700l130-7"/><path stroke="#62b8bc" stroke-width="10" d="M560 694l60 5"/>
   <path stroke="#78dede" stroke-width="20" stroke-linejoin="round" d="M255 570l-88 37M166 750l151 74 114-124-45-80"/><g stroke="#5cb8b8" stroke-width="9"><path d="M164 607v140M176 610v138"/></g>
   <path stroke="#f4f414" stroke-width="21" stroke-linejoin="bevel" stroke-linecap="butt" d="M256 571l83-34 49 88"/>
   <path stroke="#b8ffff" stroke-width="4" opacity=".6" d="M248 572l-78 34M170 750l146 72 110-120"/>
  </g></svg>
 </div>
 <div class="bar">
  <div class="group"><span><svg><use href="#undo"/></svg></span><span><svg><use href="#gear"/></svg></span><span><svg><use href="#tv"/></svg></span><span><svg><use href="#mouse"/></svg></span><span class="dis"><svg><use href="#undo"/></svg></span></div>
  <div class="restore"><svg><use href="#history"/></svg>RESTORE CLIP/SLAB/CENTRE</div>
 </div>
</section>

<section class="right">
 <div class="rtabs"><span class="t1">VECTOR<br>SELECTOR</span><span class="t2">SELECTED<br>COMPOUNDS</span><span class="t3">RUBENSANCHEZGARCIA-<br>FRAGMENSTEIN</span><span class="t4"><svg><use href="#drop"/></svg></span></div>
 <div class="card set">
  <div class="head"><h2>RubenSanchezGa…</h2><span class="sfield"><svg><use href="#search"/></svg>Search</span><svg class="ic20 lk"><use href="#link"/></svg><svg class="ic20"><use href="#filter"/></svg></div>
  <div class="cols"><em>Total<br>4</em><span>_id</span><span>frag</span><span>LE_s</span><span>comR</span><span>frag</span><div class="lpc"><b>L</b><b>P</b><b>C</b></div></div>
  <div class="row"><div class="num"><svg><use href="#unchecked"/></svg><i>1.</i></div><div class="info"><div class="top"><span class="name">X0020_0B_0-X0020_0B_1-X0020_…</span><svg class="tg off"><use href="#target"/></svg><div class="tags"><b>A</b><b>L</b><b>P</b><b>C</b><b>S</b><b class="f">F</b><b>X</b></div></div><div class="vals"><span>4621</span><span>-1.5</span><span>-0.3</span><span>0.91</span><span>0.22</span></div></div><div class="arr"></div><div class="pic"><svg><use href="#mol-d"/></svg></div></div>
  <div class="row"><div class="num"><svg><use href="#unchecked"/></svg><i>2.</i></div><div class="info"><div class="top"><span class="name">X0020_0B_0-X0020_0B_3-X0020_…</span><svg class="tg off"><use href="#target"/></svg><div class="tags"><b>A</b><b>L</b><b>P</b><b>C</b><b>S</b><b class="f">F</b><b>X</b></div></div><div class="vals"><span>4621</span><span>-1.0</span><span>-0.2</span><span>0.78</span><span>0.45</span></div></div><div class="arr"></div><div class="pic"><svg><use href="#mol-e"/></svg></div></div>
  <div class="row"><div class="num"><svg><use href="#unchecked"/></svg><i>3.</i></div><div class="info"><div class="top"><span class="name">X0020_0B_0-X0020_0B_1-X0020_…</span><svg class="tg"><use href="#target"/></svg><div class="tags on"><b>A</b><b>L</b><b>P</b><b>C</b><b>S</b><b class="f">F</b><b>X</b></div></div><div class="vals"><span>4621</span><span>-0.6</span><span>-0.0</span><span>0.99</span><span>0.61</span></div></div><div class="arr"><svg><use href="#up"/></svg><svg><use href="#down"/></svg></div><div class="pic sand"><svg><use href="#mol-f"/></svg></div></div>
  <div class="row"><div class="num"><svg><use href="#unchecked"/></svg><i>4.</i></div><div class="info"><div class="top"><span class="name">X0020_0B_0-X0020_0B_1-X0020_…</span><svg class="tg off"><use href="#target"/></svg><div class="tags"><b>A</b><b>L</b><b>P</b><b>C</b><b>S</b><b class="f">F</b><b>X</b></div></div><div class="vals"><span>4621</span><span>-0.9</span><span>-0.2</span><span>0.84</span><span>0.68</span></div></div><div class="arr"></div><div class="pic"><svg><use href="#mol-g"/></svg></div></div>
  <div class="foot"><i>TOTAL 4</i><span>LOAD NEXT 30</span><span>LOAD NEXT 100</span><span>LOAD FULL LIST</span></div>
 </div>
</section>
</main>
</div>
<div class="vscroll"><i></i></div>
</div>
<div class="hscroll"><i></i></div>

<aside class="insp">
 <div class="head"><h2>Inspirations</h2><span class="sfield"><svg><use href="#search"/></svg>Search</span><svg class="ic20"><use href="#close"/></svg></div>
 <div class="cols"><span>MW</span><span>logP</span><span>TPSA</span><span>HA</span><span>Hacc</span><span>Hdon</span><span>Rots</span><span>Rings</span><span>Velec</span><div class="lpc"><b>L</b><b>P</b><b>C</b></div></div>
 <div class="row"><div class="num"><b>238678</b><i>1.</i></div><div class="info"><div class="top"><span class="name">X0020_0B</span><svg class="tg"><use href="#target"/></svg><div class="tags on"><b>A</b><b>L</b><b>P</b><b>C</b><b>S</b></div><b class="d">D</b><b class="v">V</b></div><div class="vals"><span>193</span><span>1</span><span>84</span><span>14</span><span>2</span><span>3</span><span>2</span><span>1</span><span>74</span></div></div><div class="arr"><svg class="off"><use href="#up"/></svg><svg><use href="#down"/></svg></div><div class="pic rose"><svg><use href="#mol-b"/></svg></div></div>
 <div class="row"><div class="num"><b>238677</b><i>2.</i></div><div class="info"><div class="top"><span class="name">X0029_0A</span><svg class="tg"><use href="#target"/></svg><div class="tags on"><b>A</b><b>L</b><b>P</b><b>C</b><b>S</b></div><b class="d">D</b><b class="v">V</b></div><div class="vals"><span>197</span><span>1</span><span>66</span><span>14</span><span>2</span><span>2</span><span>2</span><span>1</span><span>74</span></div></div><div class="arr"><svg><use href="#up"/></svg><svg><use href="#down"/></svg></div><div class="pic orange"><svg><use href="#mol-a"/></svg></div></div>
 <div class="row"><div class="num"><b>238681</b><i>3.</i></div><div class="info"><div class="top"><span class="name">X0257_0A</span><svg class="tg"><use href="#target"/></svg><div class="tags on"><b>A</b><b>L</b><b>P</b><b>C</b><b>S</b></div><b class="d">D</b><b class="v">V</b></div><div class="vals"><span>150</span><span>2</span><span>29</span><span>10</span><span>2</span><span>1</span><span>1</span><span>2</span><span>50</span></div></div><div class="arr"><svg><use href="#up"/></svg><svg><use href="#down"/></svg></div><div class="pic azure"><svg><use href="#mol-c"/></svg></div></div>
</aside>
<svg class="cursor" viewBox="0 0 12 19"><path fill="#fff" stroke="#222" d="M.5.800v14.500l3.300-3 2.400 5.700 2.600-1.100-2.400-5.500h4.400z"/></svg>
</body>
</html>
```
FILE: styles.css
```css
* { box-sizing: border-box; }
body { margin: 0; width: 1920px; height: 1080px; overflow: hidden; background: #f2f2f0; font-family: Roboto, sans-serif; color: #263238; }
svg { display: block; flex: none; fill: currentColor; overflow: visible; }
svg.line { fill: none; }
.defs { position: absolute; width: 0; height: 0; }
i, em { font-style: normal; }

/* browser chrome */
.browser { height: 108px; background: #f4f4f2; border-bottom: 1px solid #c6c5c2; font-family: "Noto Sans", sans-serif; font-size: 14.5px; letter-spacing: -.15px; }
.tabs { display: flex; height: 38px; background: linear-gradient(#393834, #47463f); color: #dfdbd2; }
.tab { flex: none; width: 178px; height: 33px; margin-top: 5px; display: flex; align-items: center; padding: 0 9px 0 9px; border-right: 1px solid #66655e; }
.tab .fav { width: 16px; height: 16px; margin-right: 6px; }
.tab.noicon { padding-left: 10px; }
.tab span { flex: 1; min-width: 0; overflow: hidden; white-space: nowrap; margin-top: -2px; -webkit-mask-image: linear-gradient(90deg, #000 75%, transparent 100%); mask-image: linear-gradient(90deg, #000 75%, transparent 100%); }
.tab i { width: 16px; text-align: center; font: 14px "DejaVu Sans", sans-serif; letter-spacing: 0; margin: -1px 0 0 4px; }
.tab.last { border: 0; }
.tab.active { background: #f4f4f2; border: 0; border-top: 2px solid #e08a62; color: #4c4c48; height: 33px; }
.tab.active span { -webkit-mask-image: none; mask-image: none; margin-top: -3px; }
.ltr-e { font: 22px/16px "Liberation Serif", serif; color: #e27a36; letter-spacing: 0; }
.plus { width: 14px; height: 14px; margin: 14px 0 0 10px; }
.wins { display: flex; gap: 4px; margin: 11px 0 0 51px; }
.wins svg { width: 16px; height: 16px; }
.nav { display: flex; align-items: center; height: 40px; color: #5c5c58; }
.nav svg { fill: none; stroke: #5c5c58; stroke-width: 2; width: 16px; height: 16px; }
.back { width: 34px; height: 34px; margin-left: 3px; border: 1px solid #b4b4b0; border-radius: 50%; background: #fff; display: grid; place-items: center; }
.nav .fwd { margin-left: 8px; stroke: #b6b6b2; }
.nav .reload { margin-left: 16px; }
.nav .home { margin-left: 15px; width: 17px; }
.url, .find { height: 30px; background: #fff; border: 1px solid #c4c4be; border-radius: 4px; display: flex; align-items: center; color: #8b8b88; font-size: 15px; letter-spacing: -.05px; }
.url { width: 929px; margin-left: 125px; padding: 0 6px 0 8px; }
.url > i { width: 1px; height: 22px; background: #c8c8c4; margin: 0 8px; }
.nav .shield { width: 13px; stroke-width: 1.8; stroke: #737373; }
.nav .lock { width: 12px; fill: #737373; stroke: none; }
.url .addr { flex: 1; margin-left: 10px; letter-spacing: -.03px; }
.url .addr b { font-weight: 400; color: #333; }
.nav .url svg + svg { margin-left: 12px; stroke: #737373; stroke-width: 1.8; }
.nav .url .dots { stroke: none; fill: #737373; width: 16px; }
.find { width: 378px; margin-left: 10px; padding-left: 8px; gap: 6px; }
.nav .find svg { stroke: #8b8b88; }
.tools { display: flex; align-items: center; margin-left: 125px; gap: 16px; }
.tools i { width: 1px; height: 34px; background: #d0d0cc; margin: 0 -2px 0 -5px; }
.marks { display: flex; height: 28px; align-items: center; color: #464642; }
.marks span { display: flex; align-items: center; gap: 4px; white-space: nowrap; flex: none; }
.marks svg { width: 16px; height: 16px; }
.m1 { width: 115px; margin-left: 12px; } .m2 { width: 128px; } .m3 { width: 194px; } .m4 { width: 145px; } .m5 { width: 194px; } .m6 { width: 118px; } .m7 { width: 196px; } .m8 { width: 194px; } .m9 { width: 473px; }
.m1, .m3, .m4, .m5, .m7, .m9 { letter-spacing: 0; } .m6 { letter-spacing: -.3px; }
.wr { font-size: 12px; width: 16px; color: #e8813a; letter-spacing: -1px; } .wr em { color: #2448b0; font-style: italic; }
.ltr-s { width: 16px; height: 16px; background: #c8152b; color: #fff; font: 700 15px/16px "Liberation Serif", serif; text-align: center; }

/* page frame */
.page { display: flex; height: 960px; }
.app { width: 1908px; height: 960px; overflow: hidden; background: linear-gradient(90deg, #f4f8f9 1894px, #fafafb 1894px); }
.vscroll { width: 12px; padding-left: 7px; }
.vscroll i { display: block; height: 941px; background: #f0936b; border-radius: 0 0 2px 2px; }
.hscroll { height: 12px; padding: 7px 0 0 17px; }
.hscroll i { display: block; width: 1843px; height: 5px; background: #f0936b; border-radius: 2px 2px 0 0; }

.appbar { width: 1894px; height: 44px; background: #fff; display: flex; align-items: center; box-shadow: 0 2px 5px rgba(0,0,0,.4); position: relative; }
.btn { display: flex; align-items: center; height: 35px; font-size: 12px; font-weight: 500; letter-spacing: -.05px; white-space: nowrap; flex: none; }
.btn svg { width: 18px; height: 18px; margin-right: 8px; }
.blue { color: #3f51b5; }
.b-menu { width: 62px; border-right: 1px solid #c4c4c4; } .b-menu svg { margin-left: -3px; }
h1 { width: 200px; height: 35px; margin: 0; padding-left: 5px; font-size: 20.5px; line-height: 35px; font-weight: 400; white-space: nowrap; border-right: 1px solid #c4c4c4; }
h1 b { font-weight: 700; }
.b-save { width: 64px; padding-left: 3px; border-right: 1px solid #c4c4c4; }
.b-share { width: 72px; padding-left: 3px; border-right: 1px solid #c4c4c4; }
.b-down { width: 817px; padding-left: 4px; letter-spacing: .27px; } .b-down svg { width: 20px; height: 20px; }
.b-time { width: 109px; }
.b-report { width: 126px; color: #e60f0f; } .b-report svg { fill: #f00; }
.logos { width: 300px; height: 24px; margin-top: -5px; }
.b-contrib { margin-left: 11px; }
.dl { font: 700 11px "Noto Sans", sans-serif; fill: #2a2f66; } .sgc { font: 700 12.500px "Noto Sans", sans-serif; fill: #1d6b58; } .jan { font: 600 8px "Noto Sans", sans-serif; fill: #1b5f9e; } .cov { font: 8.500px "Liberation Serif", serif; fill: #555; }

main { display: flex; padding-top: 8px; height: 916px; }
.card { background: #fff; border-radius: 5px; box-shadow: 0 1px 2px rgba(0,0,0,.35); }
.head { display: flex; align-items: center; height: 40px; background: #3f51b5; color: #fff; border-radius: 5px 5px 0 0; padding-top: 4px; }
h2 { margin: 0; font-size: 16.8px; font-weight: 500; letter-spacing: .2px; padding-left: 2px; flex: 1; white-space: nowrap; }
.ic20 { width: 20px; height: 20px; margin-right: 13px; }
.left { width: 482px; flex: none; }
.cluster { height: 220px; }
.clear { display: flex; align-items: center; font-size: 11.4px; font-weight: 500; letter-spacing: .1px; margin-right: 25px; } .clear svg { width: 18px; height: 18px; margin-right: 8px; }
.cbody { display: flex; padding-left: 6px; }
.map { width: 193px; height: 156px; margin-top: 8px; background: #000; }
fieldset { width: 275px; height: 168px; margin: 4px 0 0; padding: 0 0 0 10px; border: 1px solid #dcdcdc; display: flex; min-width: 0; }
legend { font-size: 14px; font-weight: 700; line-height: 16px; padding: 0; margin-left: -3px; height: 16px; }
.sites { height: 149px; margin-top: 1px; overflow: hidden; flex: 1; margin-left: -1px; }
.sites label { display: flex; align-items: center; height: 22px; font-size: 14px; gap: 8px; }
.sites label:first-child { margin-top: -8px; }
.sites svg { width: 20px; height: 20px; fill: #546e7a; }
.sites .on { color: #3f51b5; } .sites .on svg { fill: #3f51b5; }
.thumb { width: 5px; height: 41px; background: #f0936b; margin-top: -5px; border-radius: 1px; }

.navi { margin-top: 8px; height: 680px; position: relative; }
.select { width: 87px; height: 29px; display: flex; align-items: center; justify-content: space-between; border-bottom: 1px solid #fff; font-size: 14px; margin-right: 16px; } .select svg { width: 20px; height: 20px; }
.sfield { display: flex; align-items: center; gap: 9px; width: 116px; height: 29px; border-bottom: 1px solid #fff; font-size: 14px; color: rgba(255,255,255,.5); } .sfield svg { width: 20px; height: 20px; color: #fff; }
.sw { margin-left: 20px; margin-right: 24px; }
.cols { display: flex; height: 28px; margin: 8px 0 0 21px; font-size: 7.800px; font-weight: 700; }
.cols span { width: 25px; border-right: 1px solid #c8c8c8; display: flex; align-items: center; padding-left: 4px; overflow: hidden; white-space: nowrap; color: #222; }
.cols span:first-child { padding-left: 5px; } .cols span:nth-child(4) { padding-left: 7px; }
.lpc { margin: 6px 0 0 16px; width: 35px; }
.lpc, .tags { height: 17px; display: flex; border-right: 1px solid #3f51b5; }
.tags { width: 59px; }
.lpc b, .tags b { flex: 1; background: #c5cae9; border: 1px solid #3f51b5; border-right: 0; font-size: 10px; font-weight: 700; line-height: 15px; text-align: center; color: #263238; }
.lpc b:first-child { background: #3f51b5; color: #fff; }
.lpc.half b:first-child { background: #7986cb; color: #fff; }
.tags.on b:nth-child(1) { background: #7986cb; color: #fff; }
.tags.on b:nth-child(2), .tags b.f { background: #3f51b5; color: #fff; }
.d, .v { font-size: 10px; font-weight: 700; height: 17px; line-height: 15px; text-align: center; }
.d { width: 10px; margin-left: 1px; background: #c5cae9; border-top: 1px solid #dfe2f3; color: #9ea3c2; }
.v { width: 13px; margin-left: 1px; background: #c5cae9; border: 1px solid #3f51b5; color: #263238; }
.row { display: flex; height: 50px; margin: 0 0 4px 4px; width: 468px; border: 1px solid #ccc; color: #000; }
.cols + .row { margin-top: 2px; }
.num { width: 14px; background: #f4f8f9; border-right: 1px solid #ccc; display: flex; flex-direction: column; justify-content: space-between; align-items: center; font-size: 12px; padding: 3px 0 5px; white-space: nowrap; flex: none; }
.num b { font-weight: 500; } .num i { font-size: 7px; line-height: 7px; font-style: italic; color: #333; }
.info { border-left: 1px solid #ccc; width: 283px; display: flex; flex-direction: column; justify-content: space-between; flex: none; }
.top { display: flex; padding: 6px 15px 0 0; }
.name { flex: 1; font-size: 12.600px; font-weight: 500; line-height: 14px; margin-top: -2px; white-space: nowrap; }
.tg { width: 10px; height: 10px; margin: 4px 2px 0 0; color: #222; } .off { color: #bbb !important; }
.vals { display: flex; height: 18px; font-size: 11.200px; font-weight: 600; line-height: 17px; }
.vals span { width: 25px; border-right: 1px solid #ccc; text-align: center; letter-spacing: .1px; }
.vals span:first-child { text-align: right; }
.vals span:last-child { border: 0; width: 33px; }
.arr { width: 19px; border-left: 1px solid #ccc; display: flex; flex-direction: column; justify-content: space-between; align-items: center; padding: 5px 0 5px; color: #3f51b5; flex: none; } .arr svg { width: 12px; height: 12px; }
.pic { flex: 1; border-left: 1px solid #ccc; } .pic svg { width: 149px; height: 48px; }
.orange { background: #ff7048; } .rose { background: #c96464; } .azure { background: #1f75ff; } .sand { background: #f9e7b2; }
path.bk, path.or, path.nb, path.fc, path.sy, .thick { fill: none; stroke-width: 1; }
path.bk, .thick { stroke: #111; } path.thick { stroke-width: 2; } path.or { stroke: #f22; } path.nb { stroke: #33f; } path.fc { stroke: #3cc; } path.sy { stroke: #cc2; }
symbol text { font: 6.5px "DejaVu Sans", sans-serif; text-anchor: middle; letter-spacing: -.5px; }
text.or { fill: #f22; } text.nb { fill: #22f; } text.fc { fill: #3cc; } text.sy { fill: #cc2; } text.bkt { fill: #222; }
.foot { position: absolute; left: 0; bottom: 6px; width: 100%; height: 33px; display: flex; line-height: 33px; font-size: 12px; font-weight: 500; letter-spacing: .35px; color: #3f51b5; padding-left: 2px; }
.foot i { font-style: italic; flex: 1; }
.foot span { padding: 0 8px; border-left: 1px solid #9fa8da; white-space: nowrap; } .foot i + span { border: 0; }
.navi .foot { padding-right: 8px; }

.mid { width: 888px; margin-left: 14px; flex: none; }
.viewer { height: 867px; background: #000; border-radius: 4px; box-shadow: 0 1px 3px rgba(0,0,0,.5); } .viewer svg { width: 888px; height: 867px; }
.bar { display: flex; margin: 8px 0 0 206px; height: 40px; gap: 64px; color: #fff; }
.group { display: flex; width: 200px; border-radius: 4px; overflow: hidden; box-shadow: 0 1px 3px rgba(0,0,0,.4); }
.group span { width: 40px; background: #3f51b5; border-right: 1px solid #1a237e; padding: 9px 0 0 10px; } .group svg { width: 20px; height: 20px; }
.group .dis { background: #d5dbdb; color: #a6a9a9; border: 0; } .dis svg { transform: scaleX(-1); }
.restore { width: 212px; padding: 0 0 2px 4px; display: flex; align-items: center; gap: 9px; background: #3f51b5; border-radius: 4px; font-size: 12px; font-weight: 500; letter-spacing: .35px; box-shadow: 0 1px 3px rgba(0,0,0,.4); white-space: nowrap; } .restore svg { width: 20px; height: 20px; }

.right { width: 488px; margin-left: 14px; flex: none; }
.rtabs { display: flex; height: 48px; color: #3f51b5; font-size: 11.5px; font-weight: 500; line-height: 20px; text-align: center; letter-spacing: .05px; border-radius: 4px; overflow: hidden; box-shadow: 0 1px 3px rgba(0,0,0,.4); background: #f4f8f9; }
.rtabs span { border-right: 1px solid #1a237e; padding-top: 4px; }
.t1 { width: 94px; } .t2 { width: 115px; } .t3 { width: 199px; background: #3f51b5; color: #fff; } .t4 { width: 41px; } .rtabs svg { width: 20px; height: 20px; margin: 11px 0 0 9px; }
.set { height: 860px; position: relative; }
.set h2 { padding-left: 8px; } .set .sfield { width: 140px; margin-right: 20px; } .lk { margin-right: 24px; }
.set .cols { margin-left: 8px; } .set .cols em { width: 22px; border-right: 1px solid #c8c8c8; font-style: italic; font-weight: 400; line-height: 12px; text-align: center; padding-right: 3px; height: 29px; }
.set .cols span { width: 32px; padding: 0; justify-content: center; } .set .lpc { margin-left: 4px; }
.set .row { width: 530px; margin-left: 10px; } .set .cols + .row { margin-top: 3px; }
.set .num { width: 18px; padding: 2px 0 6px; } .set .num svg { width: 17px; height: 17px; fill: #607d8b; }
.set .info { width: 349px; } .set .top { padding: 5px 4px 0 2px; } .set .name { margin-top: -1px; } .set .tags { width: 82px; } .set .tg { margin: 5px 3px 0 0; }
.set .vals { height: 21px; line-height: 20px; } .set .vals span { width: 32px; text-align: center; } .set .vals span:last-child { border: 0; }
.set .foot { padding: 0 0 0 9px; width: 548px; }

.insp { position: absolute; left: 934px; top: 393px; width: 472px; height: 294px; background: #fff; border-radius: 5px; box-shadow: 0 1px 3px rgba(0,0,0,.35); }
.insp .head { background: #2979ff; padding-top: 1px; } .insp h2 { padding-left: 8px; } .insp .sfield { width: 140px; height: 30px; padding-bottom: 1px; margin: -7px 20px 0 0; } .insp .sfield svg { margin-top: 4px; } .insp .ic20 { margin-right: 13px; }
.insp .cols { margin-left: 27px; } .insp .row { margin-left: 10px; width: 452px; }
.insp .num { width: 23px; } .insp .num b { align-self: flex-start; width: 23px; overflow: visible; } .insp .num i { align-self: flex-end; } .insp .info { width: 258px; } .insp .top { padding-right: 6px; }
.cursor { position: absolute; left: 618px; top: 425px; width: 12px; height: 19px; }
```
